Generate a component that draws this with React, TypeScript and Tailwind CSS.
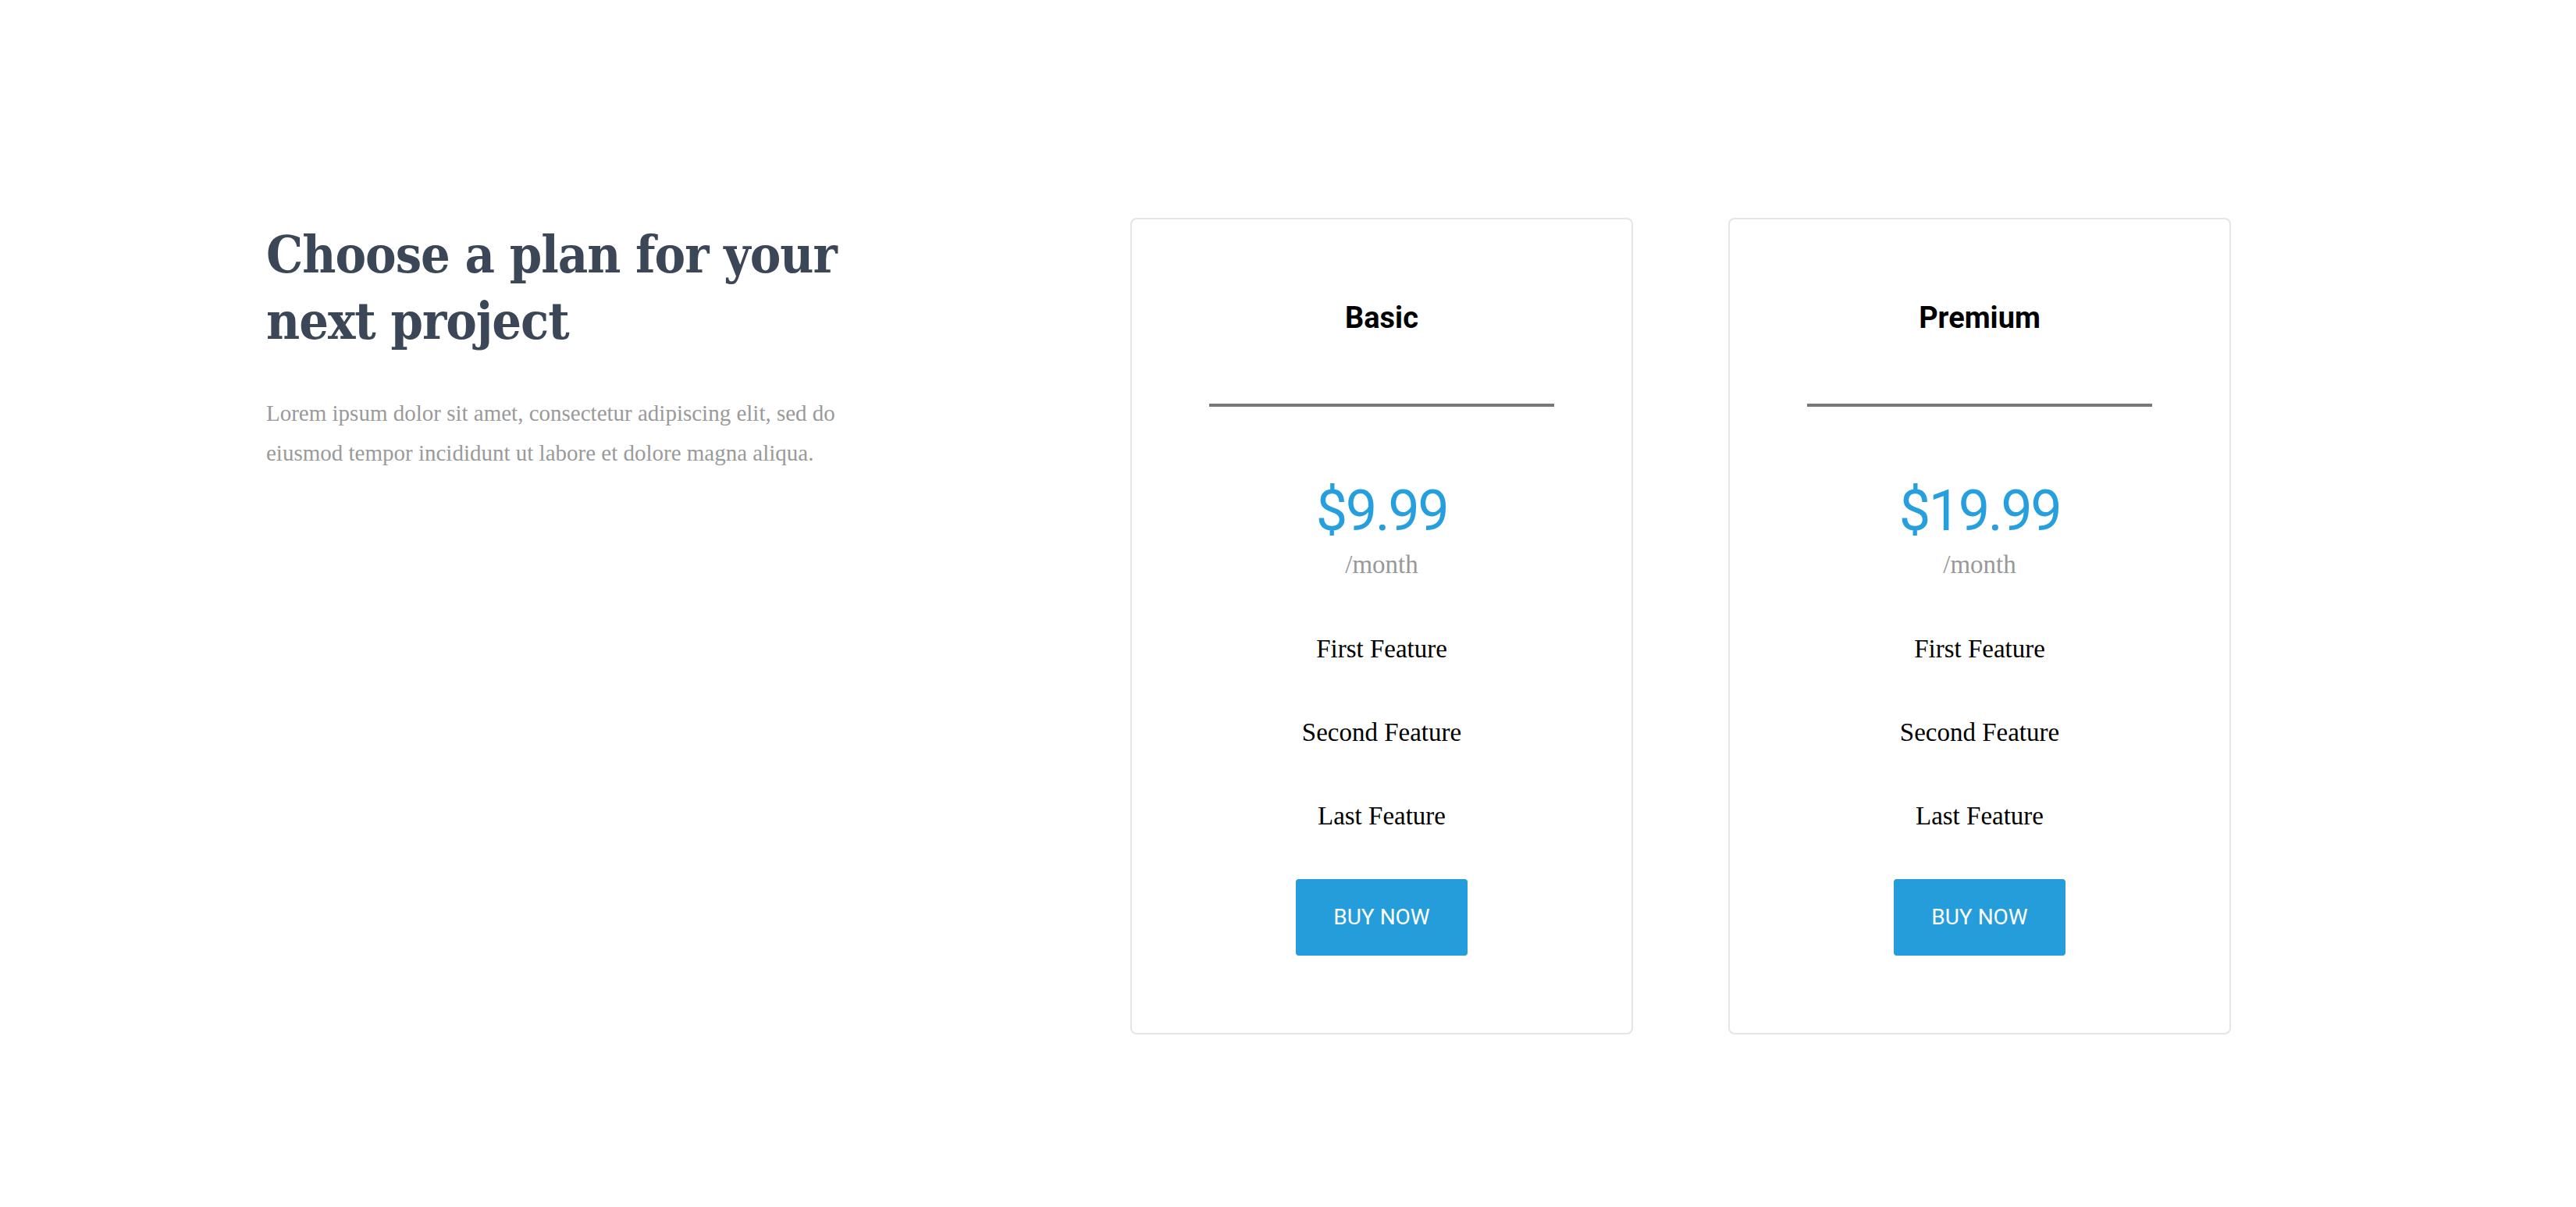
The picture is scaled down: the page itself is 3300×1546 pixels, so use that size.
interface Plan {
    name: string;
    price: string;
    features: string[];
}

const plans: Plan[] = [
    { name: "Basic", price: "$9.99", features: ["First Feature", "Second Feature", "Last Feature"] },
    { name: "Premium", price: "$19.99", features: ["First Feature", "Second Feature", "Last Feature"] },
];

function PlanCard({ plan }: { plan: Plan }) {
    return (
        <div className="w-[644px] border-2 border-[#e2e5e9] rounded-lg bg-white px-[99px] pt-[107px] pb-[99px] flex flex-col items-center">
            <h3 className="font-['Roboto',sans-serif] font-bold text-[38px] leading-[38px] text-black">
                {plan.name}
            </h3>
            <div className="w-full h-[4px] bg-[#777777] mt-[91px]" />
            <div className="mt-[98px] font-['Roboto',sans-serif] text-[72px] leading-[72px] tracking-[-2.5px] text-[#259fdd]">
                {plan.price}
            </div>
            <div className="mt-[16px] font-['Liberation_Serif',serif] text-[33px] leading-[32px] text-[#999999]">
                /month
            </div>
            <ul className="mt-[76px] flex flex-col items-center gap-[75px] font-['Liberation_Serif',serif] text-[33px] leading-[32px] text-black">
                {plan.features.map((feature) => (
                    <li key={feature}>{feature}</li>
                ))}
            </ul>
            <button className="mt-[65px] w-[220px] h-[98px] rounded bg-[#259ddb] text-white font-['Roboto',sans-serif] text-[28px] uppercase">
                Buy Now
            </button>
        </div>
    );
}

export default function App() {
    return (
        <div className="min-h-screen bg-white">
            <div className="flex pl-[341px] pt-[279px]">
                {/* Intro */}
                <div className="w-[1107px] shrink-0 pt-[5px]">
                    <h1 className="w-[800px] font-['DejaVu_Serif_Condensed','DejaVu_Serif',serif] font-stretch-condensed font-bold text-[66px] leading-[85px] tracking-[-1px] text-[#3b4656]">
                        Choose a plan for your
                        <br />
                        next project
                    </h1>
                    <p className="w-[760px] mt-[50px] font-['Liberation_Serif',serif] text-[29px] leading-[51px] text-[#9a9a9a]">
                        Lorem ipsum dolor sit amet, consectetur adipiscing elit, sed do eiusmod tempor
                        incididunt ut labore et dolore magna aliqua.
                    </p>
                </div>

                {/* Plans */}
                <div className="flex gap-[122px]">
                    {plans.map((plan) => (
                        <PlanCard key={plan.name} plan={plan} />
                    ))}
                </div>
            </div>
        </div>
    );
}
